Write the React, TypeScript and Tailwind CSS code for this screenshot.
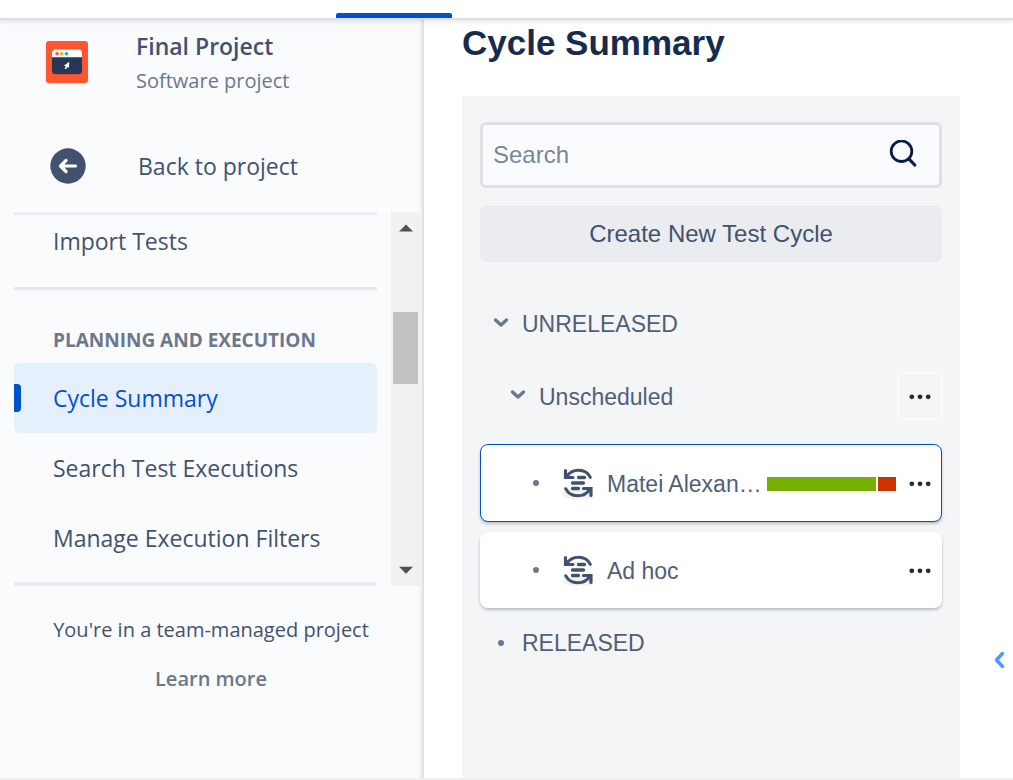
import React from "react";

const sidebarFont = "font-['Open_Sans','Noto_Sans',sans-serif]";
const mainFont = "font-['Liberation_Sans',Arial,sans-serif]";

function ProjectIcon() {
  return (
    <svg viewBox="0 0 42 42" className="mt-[13px] size-[42px] shrink-0" aria-hidden="true">
      <rect width="42" height="42" rx="3" fill="#ff5630" />
      <path d="M6 16h30v14a3.5 3.5 0 0 1-3.5 3.500h-23A3.500 3.500 0 0 1 6 30z" fill="#c9442c" />
      <path d="M6 16h30v13.500a3.500 3.500 0 0 1-3.500 3.500h-23a3.500 3.500 0 0 1-3.500-3.500z" fill="#253858" />
      <path d="M6 16.200v-4.200a3.500 3.500 0 0 1 3.500-3.500h23a3.500 3.500 0 0 1 3.500 3.500v4.200z" fill="#fff" />
      <circle cx="11" cy="12.700" r="1.800" fill="#ff5252" />
      <circle cx="15.700" cy="12.700" r="1.800" fill="#ffab00" />
      <circle cx="20.500" cy="12.700" r="1.800" fill="#00b8d9" />
      <path d="M23.200 20.800l-.200 6-1.300-.700-1.900 2.200-1.200-.800 1.300-2.300-2.100-.500z" fill="#fff" />
    </svg>
  );
}

function BackIcon() {
  return (
    <svg viewBox="0 0 36 36" className="size-9 shrink-0" fill="none" aria-hidden="true">
      <circle cx="18" cy="18" r="17.700" fill="#42526e" />
      <path d="M25.500 18H10.800M16 12.500L10.500 18l5.500 5.500" stroke="#fff" strokeWidth="3.200" strokeLinecap="round" strokeLinejoin="round" />
    </svg>
  );
}

function SearchIcon() {
  return (
    <svg viewBox="0 0 30 30" className="size-[30px]" fill="none" stroke="#091e42" aria-hidden="true">
      <circle cx="13.500" cy="11.200" r="10.300" strokeWidth="2.800" />
      <path d="M20.800 18.800l6 6.200" strokeWidth="3.200" strokeLinecap="round" />
    </svg>
  );
}

function ChevronIcon() {
  return (
    <svg viewBox="0 0 16 16" className="size-4" fill="none" aria-hidden="true">
      <path d="M2.500 4l5.500 5 5.500-5" stroke="#6b778c" strokeWidth="3.400" strokeLinecap="round" strokeLinejoin="round" />
    </svg>
  );
}

function CycleIcon() {
  return (
    <svg viewBox="0 0 32 32" className="size-8 shrink-0" fill="none" aria-hidden="true">
      <path d="M2 22h29v9.500h-5C17 33 3 32 2 28z" fill="#f2f2f2" />
      <g stroke="#42526e" strokeLinecap="round">
        <path d="M6 9.500C10.500 1.500 24.500.5 29.300 10.300" strokeWidth="3" />
        <path d="M28.500 22.500C24 30.500 9.500 31.500 4.700 21.700" strokeWidth="3" />
        <path d="M12 10.500H4.500V3.500" strokeWidth="3.200" />
        <path d="M22.500 21.500h7.500v7" strokeWidth="3.200" />
        <path d="M17.500 10.500h6M11.500 16h11M11.500 21.500h6" strokeWidth="3.300" />
      </g>
      <path d="M3.500 4v7.500h7z" fill="#42526e" />
      <path d="M31 28v-7.500h-7z" fill="#42526e" />
    </svg>
  );
}

function DotsIcon() {
  return (
    <svg viewBox="0 0 24 8" className="h-2 w-6" fill="#2b2b2b" aria-hidden="true">
      <circle cx="3.800" cy="4.800" r="2.400" />
      <circle cx="12" cy="4.800" r="2.400" />
      <circle cx="20.200" cy="4.800" r="2.400" />
    </svg>
  );
}

function Bullet() {
  return <span aria-hidden="true" className="size-1.5 shrink-0 rounded-full bg-[#6b778c]" />;
}

function NavLink({ label, active = false }: { label: string; active?: boolean }) {
  return (
    <a
      href="#"
      aria-current={active ? "page" : undefined}
      className={
        active
          ? "flex h-[70px] items-center rounded-md bg-[#e6effc] text-[#0052cc]"
          : "flex h-[70px] items-center rounded-md"
      }
    >
      <span className={active ? "h-7 w-[7px] rounded-r bg-[#0052cc]" : "w-[7px]"} />
      <span className="ml-8">{label}</span>
    </a>
  );
}

function CycleCard({
  name,
  selected = false,
  results,
}: {
  name: string;
  selected?: boolean;
  results?: { passed: number; failed: number };
}) {
  return (
    <li
      className={
        selected
          ? "flex h-[78px] items-center rounded-lg border border-[#0052cc] bg-white pl-[52px] shadow-[0_2px_3px_rgba(9,30,66,0.25)]"
          : "flex h-[76px] items-center rounded-lg bg-white pr-px pl-[53px] shadow-[0_2px_3px_rgba(9,30,66,0.25)]"
      }
    >
      <Bullet />
      <span className="ml-[22px]">
        <CycleIcon />
      </span>
      <span className="ml-3.5 flex-1 pt-0.5 whitespace-nowrap">{name}</span>
      {results && (
        <span
          role="img"
          aria-label="Execution results"
          className="mt-0.5 flex h-3.5 w-[129px] gap-0.5"
        >
          <span className="bg-[#75b000]" style={{ flexGrow: results.passed }} />
          <span className="bg-[#cc3300]" style={{ flexGrow: results.failed }} />
        </span>
      )}
      <button type="button" aria-label="More actions" className="flex h-12 w-[45px] items-center justify-end pr-[9px]">
        <DotsIcon />
      </button>
    </li>
  );
}

function Sidebar() {
  return (
    <aside
      className={`${sidebarFont} flex w-[424px] shrink-0 flex-col border-r-2 border-[#e1e2e5] bg-[#fafbfd] text-[23px] text-[#42526e] shadow-[inset_-4px_0_3px_-2px_rgba(9,30,66,0.06)]`}
    >
      <div className="flex items-start gap-12 pt-2 pl-[46px]">
        <ProjectIcon />
        <div>
          <div className="text-[23px] leading-9 font-semibold">Final Project</div>
          <div className="text-[20px] leading-[34px] text-[#6b778c]">Software project</div>
        </div>
      </div>
      <a href="#" className="mt-[33px] mb-[11px] flex h-[70px] items-center gap-[52px] pl-[50px]">
        <BackIcon />
        <span>Back to project</span>
      </a>
      <div className="flex justify-between pr-0.5 pl-3.5">
        <nav aria-label="Project" className="w-[363px] border-t-3 border-b-4 border-[#ebecf0]">
          <div className="border-b-3 border-[#e6e7ea] pb-5">
            <a href="#" className="flex h-13 items-center pl-[39px]">
              Import Tests
            </a>
          </div>
          <h2 className="pt-[34px] pb-1.5 pl-[39px] text-[19px] leading-[33px] font-bold text-[#6b778c]">
            PLANNING AND EXECUTION
          </h2>
          <NavLink label="Cycle Summary" active />
          <NavLink label="Search Test Executions" />
          <NavLink label="Manage Execution Filters" />
          <div className="h-[9px]" />
        </nav>
        <div aria-hidden="true" className="flex w-[29px] flex-col items-center bg-[#f1f1f1] py-3">
          <svg viewBox="0 0 14 8" className="h-2 w-3.5" fill="#505050">
            <path d="M0 7.500l7-7 7 7z" />
          </svg>
          <div className="mt-20 h-[72px] w-[25px] bg-[#c1c1c1]" />
          <svg viewBox="0 0 14 8" className="mt-auto h-2 w-3.5" fill="#505050">
            <path d="M0 .8l7 7 7-7z" />
          </svg>
        </div>
      </div>
      <div className="flex flex-col items-center gap-[17px] pt-7 pb-20 text-[20px] leading-8">
        <p>You&apos;re in a team-managed project</p>
        <a href="#" className="font-semibold text-[#6b778c]">
          Learn more
        </a>
      </div>
    </aside>
  );
}

export default function App() {
  return (
    <div className="flex min-h-screen flex-col border-b-2 border-[#f0f0f1] bg-white">
      <header className="relative z-10 flex h-5 items-end border-b-2 border-[#dddfe4] pl-[336px] shadow-[0_2px_4px_rgba(9,30,66,0.1)]">
        <div className="h-[5px] w-[116px] rounded-t-xs bg-[#0052cc]" />
      </header>
      <div className="flex flex-1">
        <Sidebar />
        <main className={`${mainFont} flex min-w-0 flex-1 text-[23px] text-[#505f79]`}>
          <div className="flex min-w-0 flex-1 flex-col pl-[38px]">
            <h1 className="pt-[3px] pb-[33px] text-[35px] leading-10 font-bold text-[#172b4d]">Cycle Summary</h1>
            <section className="flex-1 bg-[#f4f5f7] px-[18px] pt-[26px]">
              <label className="flex h-[66px] items-center rounded-md border-3 border-[#dfe1e6] bg-[#fafbfd] pr-[21px] pl-2.5 text-[24px]">
                <input
                  type="text"
                  aria-label="Search"
                  placeholder="Search"
                  className="min-w-0 flex-1 bg-transparent outline-none placeholder:text-[#7a869a]"
                />
                <SearchIcon />
              </label>
              <button
                type="button"
                className="mt-[18px] h-14 w-full rounded-md bg-[#ebecf0] text-[24px] text-[#42526e]"
              >
                Create New Test Cycle
              </button>
              <ul className="mt-8">
                <li>
                  <div className="flex h-[60px] items-center pl-[13px]">
                    <button type="button" aria-label="Collapse unreleased" className="mr-[13px]">
                      <ChevronIcon />
                    </button>
                    UNRELEASED
                  </div>
                  <ul className="pt-[18px]">
                    <li>
                      <div className="flex h-12 items-center pl-[30px]">
                        <button type="button" aria-label="Collapse unscheduled" className="mr-[13px]">
                          <ChevronIcon />
                        </button>
                        <span className="flex-1 pt-0.5">Unscheduled</span>
                        <button
                          type="button"
                          aria-label="More actions"
                          className="flex h-12 w-11 items-center justify-center rounded-md border border-white"
                        >
                          <DotsIcon />
                        </button>
                      </div>
                      <ul className="flex flex-col gap-2.5 pt-6">
                        <CycleCard name="Matei Alexan…" selected results={{ passed: 109, failed: 18 }} />
                        <CycleCard name="Ad hoc" />
                      </ul>
                    </li>
                  </ul>
                </li>
                <li className="flex h-[70px] items-center gap-[18px] pl-[18px]">
                  <Bullet />
                  RELEASED
                </li>
              </ul>
            </section>
          </div>
          <div className="flex w-[53px] shrink-0 items-end justify-end pr-[7px] pb-[110px]">
            <button type="button" aria-label="Expand panel">
              <svg viewBox="0 0 14 18" className="h-[18px] w-3.5" fill="none" aria-hidden="true">
                <path d="M10.500 3.500L4.500 10l6 6.500" stroke="#4c9aff" strokeWidth="3.400" strokeLinecap="round" strokeLinejoin="round" />
              </svg>
            </button>
          </div>
        </main>
      </div>
    </div>
  );
}
